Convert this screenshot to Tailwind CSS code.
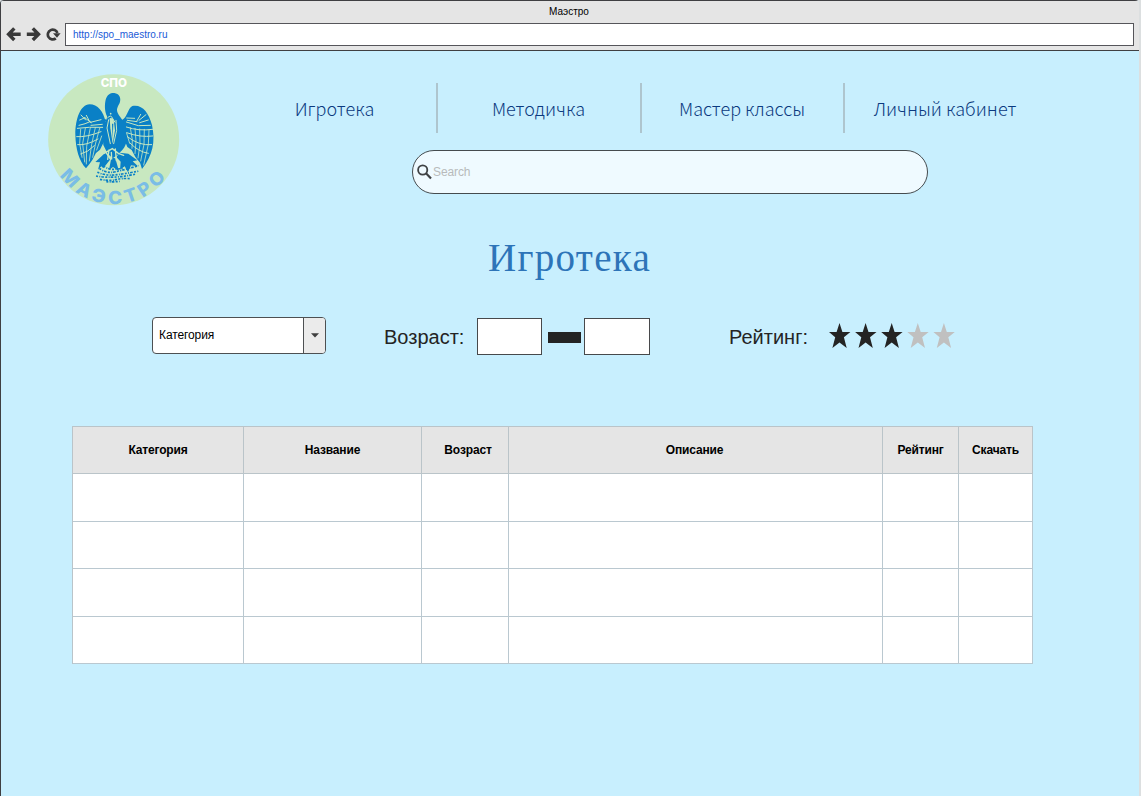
<!DOCTYPE html>
<html lang="ru">
<head>
<meta charset="utf-8">
<title>Маэстро</title>
<script src="https://cdn.jsdelivr.net/npm/@tailwindcss/browser@4"></script>
</head>
<body class="w-[1141px] h-[796px] overflow-hidden bg-[#dcdfe0] font-['Liberation_Sans',Arial,sans-serif]">
<div class="w-[1139px] h-[796px] flex flex-col bg-[#c8effe] border-l border-[#3f3f42] rounded-t-[4px] overflow-hidden">
  <header class="h-[51px] shrink-0 bg-[#e5e5e5] border-t border-b border-[#3f3f42] flex flex-col">
    <div class="h-[22px] pt-[4px] pr-[2px] text-center text-[10px] leading-[14px] text-black">Маэстро</div>
    <div class="flex items-center h-[23px] pl-[5px]">
      <svg class="w-[15px] h-[16px]" viewBox="0 0 15 16" fill="none" stroke="#3a3a3a" stroke-width="3.4"><path d="M8.300 1.400 2.600 7.200l5.700 5.800M3 7.200h11.700"/></svg>
      <svg class="w-[15px] h-[16px] ml-[5px]" viewBox="0 0 15 16" fill="none" stroke="#3a3a3a" stroke-width="3.4"><path d="M6.800 1.400l5.700 5.800-5.700 5.800M12.300 7.200H.8"/></svg>
      <svg class="w-[15px] h-[14px] ml-[5px]" viewBox="0 0 15 14" fill="none" stroke="#3a3a3a" stroke-width="2.7"><path d="M9.800 10.400A4.900 4.900 0 1 1 11.400 5"/><path d="M7 5.200h7.600l-3.600 4.600z" fill="#3a3a3a" stroke="none"/></svg>
      <div class="ml-[4px] w-[1069px] h-[23px] bg-white border border-[#55555a] pl-[7px] text-[10px] leading-[21px] text-[#1a5ad7]">http://spo_maestro.ru</div>
    </div>
  </header>

  <section class="flex h-[165px] shrink-0">
    <svg class="w-[150px] h-[150px] ml-[39px] mt-[14px] shrink-0" viewBox="0 0 450 450">
      <defs><path id="arc" d="M26 222A195 195 0 0 0 416 222"/></defs>
      <circle cx="221" cy="224" r="196.500" fill="#c8e8c0"/>
      <text x="182" y="65" textLength="79" lengthAdjust="spacingAndGlyphs" font-family="Inter" font-weight="800" font-size="35" fill="#fff">СПО</text>
      <g fill="#0a80c6">
        <path d="M196 170C192 140 172 118 149 118C121 119 106 162 106 209C107 252 117 288 138 310L149 296L157 285L168 264L180 254L194 226Z"/>
        <path d="M246 165C262 158 262 132 277 123C306 117 326 142 336 180C347 230 338 272 306 312L300 293L286 276L275 255L262 246L250 216Z"/>
        <path d="M196 170C190 160 178 145 172 130L186 158L203 166Z"/>
        <path d="M201 154C193 137 194 116 197 104C202 87 213 83 223 84C237 86 245 98 239 114C235 123 229 129 232 141C236 154 252 166 256 183L259 231C256 248 245 257 233 269L218 280L203 266L190 240L187 192C188 176 202 168 201 154Z"/>
        <path d="M196 263L210 284L190 310L184 304L174 314L180 292L166 291Z"/>
        <path d="M239 263L265 266L292 286L278 289L294 304L273 301L264 322L254 304L240 314L242 290L229 276Z"/>
        <path d="M214 278L226 280L237 319L219 306L207 315Z"/>
      </g>
      <g fill="none" stroke="#c8e8c0" stroke-linecap="round">
        <path stroke-width="3" d="M119 165l16-7M117 181q20-4 33-11M112 190q35-5 76-3M110 215q31 2 73-15M113 239q26 3 61-17M122 267q22-5 41-25M139 151l10 19M123 150l14 15M151 172l32-8M153 181l34-3M134 158l20 15"/>
        <path stroke-width="2.400" d="M122 193l-3 42 7 42M136 190l-8 46 6 55M151 188l-11 56-1 53M166 188l-11 50-7 50M179 190l-12 44-9 43M185 213l-15 42"/>
        <path stroke-width="3" d="M325 165l-26 8M331 181l-36 1-36-11M338 193q-42 6-79-7M338 213q-37 5-78-10M335 239q-38 4-73-24M325 265q-29-4-55-31M302 148l-12 21M318 149l-21 17M284 160l-24-1M291 170l-29-4"/>
        <path stroke-width="2.400" d="M327 194l-2 44-14 62M313 193l-1 45-10 50M299 192l1 45-6 42M285 190l3 39-3 37M271 188l6 37-1 25M260 205l9 30"/>
        <path stroke-width="3" d="M203 158q10-10 14 1l8 13M206 164l-5 25 10 47M228 166l2 30-9 40"/>
        <path stroke-width="4" d="M192 265l25-14 18 14 16 6M207 255l-4 28M226 252l3 35M214 262l1 20"/>
      </g>
      <path d="M209 160q8-3 12 5l4 31-7 40-7-46z" fill="#c8e8c0"/>
      <path d="M216 176l2 48 2-48" fill="#0a80c6"/>
      <circle cx="212" cy="146" r="2.500" fill="#c8e8c0"/>
      <g fill="none" stroke="#0a80c6" stroke-width="5" stroke-dasharray="6 4 3 3 8 4">
        <path d="M178 310q20 14 38 12t80-20"/><path d="M172 322q26 10 50 8t76-12"/><path d="M168 333q30 5 60 3t60-9"/><path d="M180 343q30 6 47 1t46-3"/><path d="M199 350q20 2 40-1"/><path d="M190 303q18 12 34 10t24-2"/>
      </g>
      <text font-family="Inter" font-weight="800" font-size="54" letter-spacing="12" fill="#7abde6"><textPath href="#arc" startOffset="116" textLength="386" lengthAdjust="spacingAndGlyphs">МАЭСТРО</textPath></text>
    </svg>
    <div class="flex flex-col ml-[43px] pt-[32px]">
      <nav class="flex h-[50px] text-[18px] leading-[50px] text-center font-light text-[#0b3a80] font-['Noto_Sans_CJK_SC',sans-serif]">
        <div class="w-[205px] border-r-2 border-[#aec5ce]">Игротека</div>
        <div class="w-[204px] border-r-2 border-[#aec5ce] pr-px">Методичка</div>
        <div class="w-[203px] border-r-2 border-[#aec5ce] pr-px">Мастер классы</div>
        <div class="w-[201px] pr-px">Личный кабинет</div>
      </nav>
      <div class="ml-[179px] mt-[17px] w-[516px] h-[44px] rounded-full border border-[#454b4e] bg-[#effaff] flex items-center pl-[4px] text-[12px] text-[#b8babb]">
        <svg class="w-[16px] h-[16px]" viewBox="0 0 16 16" fill="none" stroke="#3f4244"><circle cx="5.700" cy="6" r="4.600" stroke-width="1.800"/><path d="M9 9.300l5 5.200" stroke-width="2.200"/></svg>
        <span class="leading-[14px] pb-px tracking-[-0.1px]">Search</span>
      </div>
    </div>
  </section>

  <h1 class="pl-[487px] mt-[17px] h-[50px] shrink-0 leading-[50px] text-[39px] tracking-[1.3px] text-[#2d74b8] font-['Liberation_Serif','Times_New_Roman',serif]">Игротека</h1>

  <section class="flex shrink-0 h-[39px] mt-[34px] pl-[151px] text-[#242424]">
    <div class="flex w-[174px] h-[37px] rounded-[4px] border border-[#4d5052] bg-white text-[12px] leading-[35px]">
      <div class="flex-1 pl-[6px] text-black tracking-[-0.1px]">Категория</div>
      <div class="w-[22px] border-l border-[#4d5052] bg-[#ebebeb] rounded-r-[3px] flex items-center justify-center"><svg class="w-[8px] h-[5px]" viewBox="0 0 8 5"><path d="M0 .3h8L4 4.500z" fill="#3f3f3f"/></svg></div>
    </div>
    <div class="ml-[58px] w-[93px] text-[20px] leading-[40px] whitespace-nowrap">Возраст:</div>
    <div class="mt-px w-[65px] h-[37px] bg-white border border-[#47494b]"></div>
    <div class="mt-[15px] ml-[6px] w-[33px] h-[11px] bg-[#242424]"></div>
    <div class="mt-px ml-[3px] w-[66px] h-[37px] bg-white border border-[#47494b]"></div>
    <div class="ml-[79px] w-[100px] text-[20px] leading-[40px] whitespace-nowrap">Рейтинг:</div>
    <svg class="w-[130px] h-[27px] mt-[6px]" viewBox="0 0 130 27">
      <defs><path id="star" d="M10.500 0l2.900 8.900h8L14.900 14.300 17.700 25 10.500 19.400 3.400 25 6.200 14.300 0 8.900h7.600z"/></defs>
      <g fill="#242424"><use href="#star"/><use href="#star" x="26.100"/><use href="#star" x="52.200"/></g>
      <g fill="#c0c0c0"><use href="#star" x="78.300"/><use href="#star" x="104.400"/></g>
    </svg>
  </section>

  <table class="ml-[71px] mt-[70px] w-[961px] table-fixed border-separate border-spacing-0 border-l border-t border-[#bac4c9] bg-white text-[12px] text-black">
    <colgroup><col class="w-[171px]"><col class="w-[178px]"><col class="w-[87px]"><col class="w-[374px]"><col class="w-[76px]"><col class="w-[74px]"></colgroup>
    <thead><tr class="h-[47px] bg-[#e5e5e5] tracking-[-0.15px] *:border-r *:border-b *:border-[#bac4c9] *:p-0 *:font-bold">
      <th>Категория</th><th>Название</th><th><span class="pl-[6px]">Возраст</span></th><th><span class="pr-[2px]">Описание</span></th><th>Рейтинг</th><th>Скачать</th>
    </tr></thead>
    <tbody class="[&_td]:border-r [&_td]:border-b [&_td]:border-[#bac8d0] [&_td]:p-0">
      <tr class="h-[48px]"><td></td><td></td><td></td><td></td><td></td><td></td></tr>
      <tr class="h-[47px]"><td></td><td></td><td></td><td></td><td></td><td></td></tr>
      <tr class="h-[48px]"><td></td><td></td><td></td><td></td><td></td><td></td></tr>
      <tr class="h-[47px]"><td></td><td></td><td></td><td></td><td></td><td></td></tr>
    </tbody>
  </table>
</div>
</body>
</html>
